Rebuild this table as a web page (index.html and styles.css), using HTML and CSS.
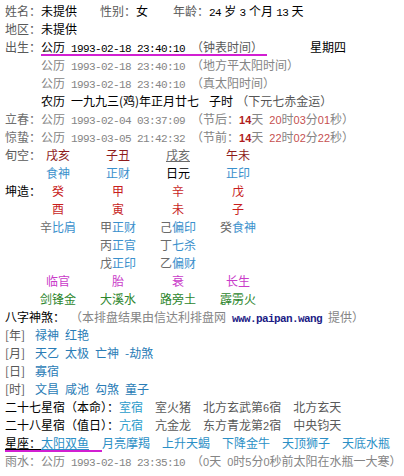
FILE: index.html
```html
<!DOCTYPE html>
<html lang="zh-CN">
<head>
<meta charset="utf-8">
<title>排盘</title>
<link rel="stylesheet" href="styles.css">
</head>
<body>
<div class="sheet">
  <div class="row r1">
    <span class="cell c1"><span class="lb">姓名：</span>未提供</span><span class="cell c2"><span class="lb">性别：</span>女</span><span class="lb">年龄：</span><span class="m">24</span> 岁 <span class="m">3</span> 个月 <span class="m">13</span> 天
  </div>
  <div class="row"><span class="lb">地区：</span>未提供</div>
  <div class="row"><span class="lb">出生：</span><span class="mark m1">公历<span class="m"> 1993-02-18 23:40:10 </span><span class="lb">（钟表时间）</span></span><span class="week">星期四</span></div>
  <div class="row sub gray">公历<span class="m"> 1993-02-18 23:40:10 </span>（地方平太阳时间）</div>
  <div class="row sub gray">公历<span class="m"> 1993-02-18 23:40:10 </span>（真太阳时间）</div>
  <div class="row sub">农历 一九九三(鸡)年正月廿七<span class="hour">子时</span><span class="yun">（下元七赤金运）</span></div>
  <div class="row gray"><span class="lb">立春：</span>公历<span class="m"> 1993-02-04 03:37:09 </span>（节后：<b class="days">14</b>天 <span class="n">20</span>时<span class="n">03</span>分<span class="n">01</span>秒）</div>
  <div class="row gray"><span class="lb">惊蛰：</span>公历<span class="m"> 1993-03-05 21:42:32 </span>（节前：<b class="days">14</b>天 <span class="n">22</span>时<span class="n">02</span>分<span class="n">22</span>秒）</div>

  <div class="pillars">
    <span class="plb lb">旬空：</span><span class="xk">戌亥</span><span class="xk">子丑</span><span class="xk self">戌亥</span><span class="xk">午未</span>
    <span class="plb"></span><span class="ss">食神</span><span class="ss">正财</span><span class="ry">日元</span><span class="ss">正印</span>
    <span class="plb">坤造：</span><span class="gz">癸</span><span class="gz">甲</span><span class="gz">辛</span><span class="gz">戊</span>
    <span class="plb"></span><span class="gz">酉</span><span class="gz">寅</span><span class="gz">未</span><span class="gz">子</span>
    <span class="plb"></span><span><span class="cg">辛</span><span class="ss">比肩</span></span><span><span class="cg">甲</span><span class="ss">正财</span></span><span><span class="cg">己</span><span class="ss">偏印</span></span><span><span class="cg">癸</span><span class="ss">食神</span></span>
    <span class="plb"></span><span></span><span><span class="cg">丙</span><span class="ss">正官</span></span><span><span class="cg">丁</span><span class="ss">七杀</span></span><span></span>
    <span class="plb"></span><span></span><span><span class="cg">戊</span><span class="ss">正印</span></span><span><span class="cg">乙</span><span class="ss">偏财</span></span><span></span>
    <span class="plb"></span><span class="cs">临官</span><span class="cs">胎</span><span class="cs">衰</span><span class="cs">长生</span>
    <span class="plb"></span><span class="ny">剑锋金</span><span class="ny">大溪水</span><span class="ny">路旁土</span><span class="ny">霹雳火</span>
  </div>

  <div class="row">八字神煞：<span class="credit">（本排盘结果由信达利排盘网 <span class="url">www.paipan.wang</span> 提供）</span></div>
  <div class="row"><span class="pos lb">[年]</span><span class="sha">禄神 红艳</span></div>
  <div class="row"><span class="pos lb">[月]</span><span class="sha">天乙 太极 亡神 -劫煞</span></div>
  <div class="row"><span class="pos lb">[日]</span><span class="sha">寡宿</span></div>
  <div class="row"><span class="pos lb">[时]</span><span class="sha">文昌 咸池 勾煞 童子</span></div>
  <div class="row">二十七星宿（本命）：<span class="xs">室宿</span><span class="sep lb">室火猪</span><span class="sep lb">北方玄武第<span class="n6">6</span>宿</span><span class="sep lb">北方玄天</span></div>
  <div class="row">二十八星宿（值日）：<span class="xs">亢宿</span><span class="sep lb">亢金龙</span><span class="sep lb">东方青龙第<span class="n6">2</span>宿</span><span class="sep lb">中央钧天</span></div>
  <div class="row"><span class="mark m2"><span class="ul">星座：</span><span class="xz ul">太阳双鱼</span></span><span class="xz">月亮摩羯</span><span class="xz sep">上升天蝎</span><span class="xz sep">下降金牛</span><span class="xz sep">天顶狮子</span><span class="xz sep">天底水瓶</span></div>
  <div class="row gray">雨水：公历<span class="m"> 1993-02-18 23:35:10 </span>（<span class="n6">0</span>天 <span class="n6">0</span>时<span class="n6">5</span>分<span class="n6">0</span>秒前太阳在水瓶一大寒）</div>
</div>
</body>
</html>
```
FILE: styles.css
```css
html, body {
  margin: 0;
  background: #ffffff;
}
body {
  font-family: "Noto Sans CJK SC", "Noto Sans", sans-serif;
  font-size: 12px;
  color: #000000;
}
.sheet {
  padding: 2px 0 0 5px;
  word-spacing: 3.3px;
}
.row {
  height: 18px;
  line-height: 18px;
  white-space: nowrap;
}
.r1 {
  word-spacing: 0.6px;
}
.cell {
  display: inline-block;
}
.c1 { width: 95px; }
.c2 { width: 73px; }
.lb { color: #595959; }
.gray { color: #858585; }
.gray .lb { color: #707070; }
.m {
  font-family: "Liberation Mono", monospace;
  font-size: 11px;
  letter-spacing: -0.6px;
  word-spacing: 0;
}
.n, .n6 {
  font-family: "Liberation Sans", sans-serif;
  font-size: 11px;
  word-spacing: 0;
}
.n { color: #c65050; }
.days {
  font-family: "Liberation Sans", sans-serif;
  font-size: 11px;
  font-weight: bold;
  color: #b01c1c;
}
.sub { padding-left: 36px; }
.mark {
  display: inline-block;
  height: 18px;
  background: linear-gradient(#d21fd2, #d21fd2) no-repeat left bottom / 100% 2px;
}
.m1 { padding-right: 4px; }
.m2 { padding-right: 13px; }
.week { margin-left: 43px; }
.hour { margin-left: 10px; }
.yun { margin-left: 3px; color: #555555; }

.pillars {
  display: grid;
  grid-template-columns: 23px repeat(4, 60px);
  grid-auto-rows: 18px;
  line-height: 18px;
  justify-items: center;
  white-space: nowrap;
}
.plb { justify-self: start; }
.xk { color: #8e1b1b; }
.self { color: #6b6b6b; text-decoration: underline; }
.ss { color: #3a90cc; }
.ry { color: #000000; }
.gz { color: #c81e1e; }
.cg { color: #6a6a6a; }
.cs { color: #c93bc9; }
.ny { color: #2d862d; }

.credit { margin-left: 11px; color: #858585; }
.url {
  font-family: "Liberation Mono", monospace;
  font-size: 11px;
  letter-spacing: -0.6px;
  word-spacing: 0;
  font-weight: bold;
  color: #1c1c86;
}
.pos {
  display: inline-block;
  width: 30px;
  word-spacing: 0;
}
.sha { color: #2a7cb6; }
.xs { color: #2a9ccb; }
.sep { margin-left: 12px; }
.xz { color: #2b8fc6; }
.ul { text-decoration: underline; }
```
